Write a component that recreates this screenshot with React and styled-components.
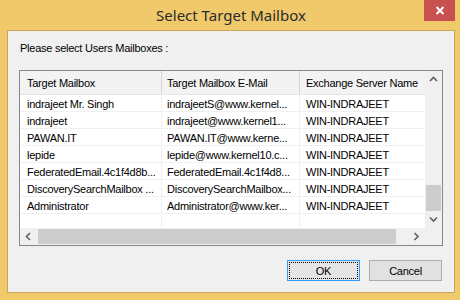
import React from 'react';
import styled, { createGlobalStyle } from 'styled-components';

const GlobalStyle = createGlobalStyle`
    html, body {
        margin: 0;
        padding: 0;
        background: #f0c96b;
    }
    * {
        box-sizing: border-box;
    }
`;

const Frame = styled.div`
    width: 460px;
    height: 300px;
    background: #f0c96b;
    padding: 0 5px 7px 7px;
    display: flex;
    flex-direction: column;
    font-family: "Liberation Sans", Arial, sans-serif;
    font-size: 11px;
    letter-spacing: -0.25px;
    color: #000;
`;

const TitleBar = styled.div`
    height: 30px;
    display: grid;
    grid-template-columns: 1fr auto 1fr;
    align-items: start;
`;

const Title = styled.div`
    grid-column: 2;
    font-family: "Noto Sans", "Open Sans", sans-serif;
    font-size: 15px;
    letter-spacing: 0;
    line-height: 20px;
    padding-top: 5px;
    color: #2b2b2b;
`;

const CloseButton = styled.div`
    grid-column: 3;
    justify-self: end;
    width: 31px;
    height: 21px;
    background: #c75050;
    display: flex;
    align-items: center;
    justify-content: center;
`;

const Client = styled.div`
    flex: 1;
    background: #f0f0f0;
    border: 1px solid #c8a75c;
    padding: 11px 11px 11px 11px;
    display: flex;
    flex-direction: column;
`;

const Prompt = styled.div`
    line-height: 13px;
    height: 13px;
    padding-left: 1px;
    margin-bottom: 15px;
`;

const ListView = styled.div`
    height: 176px;
    border: 1px solid #828790;
    display: grid;
    grid-template-columns: 1fr 17px;
    grid-template-rows: 1fr 17px;
    background: #fff;
`;

const ListBody = styled.div`
    overflow: hidden;
    background: #fff;
`;

const Columns = '142px 138px 150px';

const HeaderRow = styled.div`
    display: grid;
    grid-template-columns: ${Columns};
    height: 24px;
    background: #f3f3f3;
    border-bottom: 1px solid #e5e5e5;
`;

const HeaderCell = styled.div`
    border-right: 1px solid #d5d5d5;
    padding-left: ${p => p.$pad || 6}px;
    padding-top: 1px;
    line-height: 23px;
    white-space: nowrap;
    overflow: hidden;
`;

const Row = styled.div`
    display: grid;
    grid-template-columns: ${Columns};
    height: 17px;
    border-bottom: 1px solid #f0f0f0;
`;

const Cell = styled.div`
    border-right: 1px solid #f0f0f0;
    padding-left: ${p => p.$pad || 6}px;
    padding-top: 3px;
    line-height: 13px;
    white-space: nowrap;
    overflow: hidden;
`;

const VScroll = styled.div`
    background: #f0f0f0;
    display: flex;
    flex-direction: column;
`;

const HScroll = styled.div`
    background: #f0f0f0;
    display: flex;
`;

const Corner = styled.div`
    background: #f0f0f0;
`;

const ScrollArrow = styled.div`
    width: 17px;
    height: 17px;
    flex: none;
    display: flex;
    align-items: center;
    justify-content: center;
`;

const Track = styled.div`
    flex: 1;
    display: flex;
    flex-direction: ${p => (p.$vertical ? 'column' : 'row')};
    justify-content: ${p => (p.$vertical ? 'flex-end' : 'flex-start')};
    padding: ${p => (p.$vertical ? '0 1px' : '1px 0')};
`;

const Thumb = styled.div`
    background: #cdcdcd;
    ${p => (p.$vertical ? 'height: 26px;' : 'width: 358px; margin-left: 1px;')}
`;

const ButtonRow = styled.div`
    margin-top: 14px;
    padding-right: 1px;
    display: flex;
    justify-content: flex-end;
    gap: 9px;
`;

const DialogButton = styled.div`
    width: 73px;
    height: 21px;
    border: 1px solid ${p => (p.$default ? '#3399ff' : '#acacac')};
    background: ${p => (p.$default ? '#e5e5e5' : '#e1e1e1')};
    padding: 1px;
    display: flex;
`;

const ButtonFace = styled.div`
    flex: 1;
    display: flex;
    align-items: center;
    justify-content: center;
    border: 1px dotted ${p => (p.$focus ? '#000' : 'transparent')};
    font-size: 11px;
`;

const Chevron = ({ dir }) => {
    const paths = {
        up: 'M1 5 L4.5 1.5 L8 5',
        down: 'M1 1.5 L4.5 5 L8 1.5',
        left: 'M5 1 L1.5 4.5 L5 8',
        right: 'M1.5 1 L5 4.5 L1.5 8',
    };
    const vertical = dir === 'up' || dir === 'down';
    return (
        <svg width={vertical ? 9 : 7} height={vertical ? 7 : 9} viewBox={vertical ? '0 0 9 7' : '0 0 7 9'}>
            <path d={paths[dir]} fill="none" stroke="#606060" strokeWidth="1.6" />
        </svg>
    );
};

const mailboxes = [
    ['indrajeet Mr. Singh', 'indrajeetS@www.kernel...', 'WIN-INDRAJEET'],
    ['indrajeet', 'indrajeet@www.kernel1...', 'WIN-INDRAJEET'],
    ['PAWAN.IT', 'PAWAN.IT@www.kerne...', 'WIN-INDRAJEET'],
    ['lepide', 'lepide@www.kernel10.c...', 'WIN-INDRAJEET'],
    ['FederatedEmail.4c1f4d8b...', 'FederatedEmail.4c1f4d8...', 'WIN-INDRAJEET'],
    ['DiscoverySearchMailbox ...', 'DiscoverySearchMailbox...', 'WIN-INDRAJEET'],
    ['Administrator', 'Administrator@www.ker...', 'WIN-INDRAJEET'],
    ['', '', ''],
];

const App = () => {
    return (
        <>
            <GlobalStyle />
            <Frame>
                <TitleBar>
                    <Title>Select Target Mailbox</Title>
                    <CloseButton>
                        <svg width="10" height="9" viewBox="0 0 10 9">
                            <path d="M1.5 1 L8.5 8 M8.5 1 L1.5 8" stroke="#fff" strokeWidth="2" />
                        </svg>
                    </CloseButton>
                </TitleBar>
                <Client>
                    <Prompt>Please select Users Mailboxes :</Prompt>
                    <ListView>
                        <ListBody>
                            <HeaderRow>
                                <HeaderCell $pad={7}>Target Mailbox</HeaderCell>
                                <HeaderCell $pad={5}>Target Mailbox E-Mail</HeaderCell>
                                <HeaderCell>Exchange Server Name</HeaderCell>
                            </HeaderRow>
                            {mailboxes.map((row, i) => (
                                <Row key={i}>
                                    <Cell $pad={7}>{row[0]}</Cell>
                                    <Cell $pad={5}>{row[1]}</Cell>
                                    <Cell>{row[2]}</Cell>
                                </Row>
                            ))}
                        </ListBody>
                        <VScroll>
                            <ScrollArrow><Chevron dir="up" /></ScrollArrow>
                            <Track $vertical>
                                <Thumb $vertical />
                            </Track>
                            <ScrollArrow><Chevron dir="down" /></ScrollArrow>
                        </VScroll>
                        <HScroll>
                            <ScrollArrow><Chevron dir="left" /></ScrollArrow>
                            <Track>
                                <Thumb />
                            </Track>
                            <ScrollArrow><Chevron dir="right" /></ScrollArrow>
                        </HScroll>
                        <Corner />
                    </ListView>
                    <ButtonRow>
                        <DialogButton $default>
                            <ButtonFace $focus>OK</ButtonFace>
                        </DialogButton>
                        <DialogButton>
                            <ButtonFace>Cancel</ButtonFace>
                        </DialogButton>
                    </ButtonRow>
                </Client>
            </Frame>
        </>
    );
};

export default App;
